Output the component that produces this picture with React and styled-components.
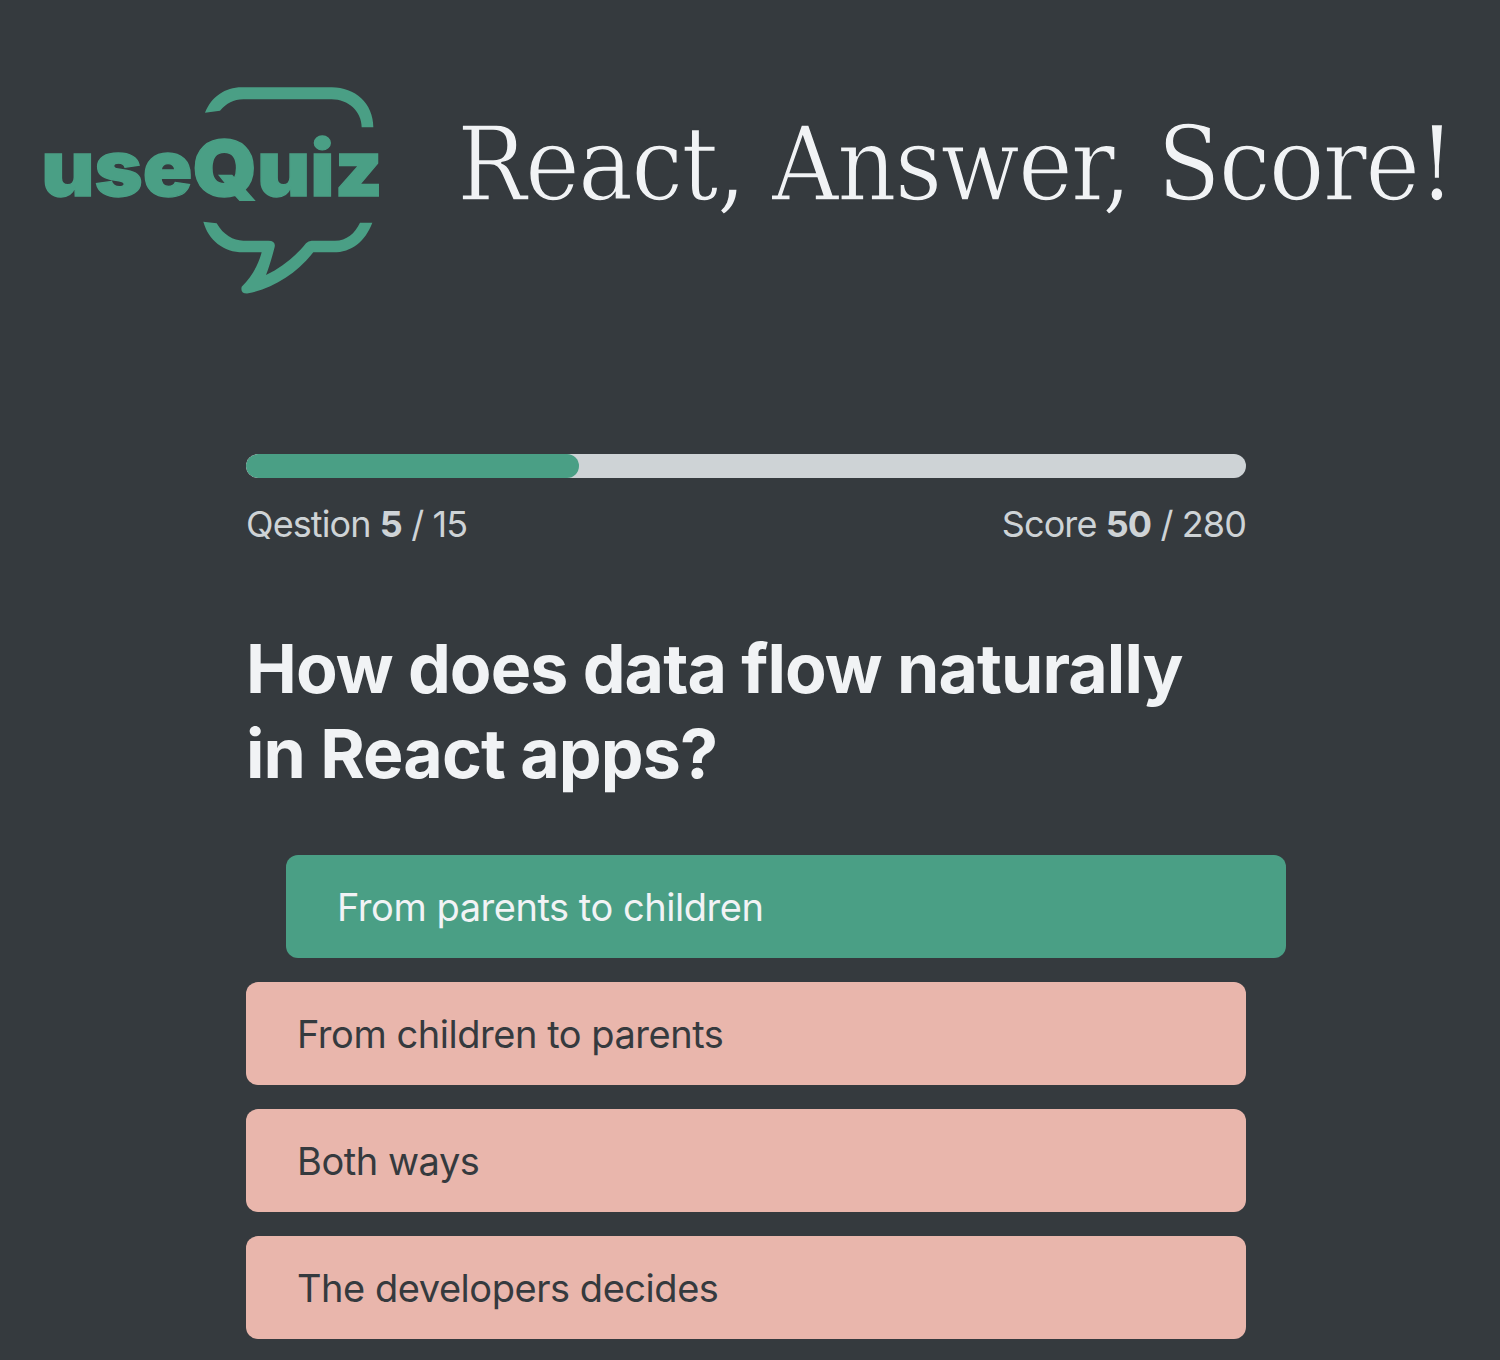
import React from 'react';
import styled, { createGlobalStyle, css } from 'styled-components';

const GlobalStyle = createGlobalStyle`
	* {
		box-sizing: border-box;
		margin: 0;
		padding: 0;
	}
	html, body {
		background: #353a3e;
		overflow: hidden;
	}
	body {
		font-family: Inter, "Liberation Sans", sans-serif;
		color: #f1f3f5;
	}
`;

const AppBlock = styled.div`
	width: 1492px;
	height: 1360px;
	display: flex;
	flex-direction: column;
	align-items: center;
`;

const Header = styled.header`
	width: 100%;
	display: flex;
	align-items: center;
	gap: 57px;
	padding: 70px 0 0 30px;
	margin-bottom: 144px;
`;

const LogoSvg = styled.svg`
	width: 370px;
	height: 240px;
	flex-shrink: 0;
`;

const LogoText = styled.text`
	font-family: Inter, "Liberation Sans", sans-serif;
	font-weight: 900;
	font-size: 232px;
	fill: #4a9f85;
	stroke: #4a9f85;
	stroke-width: 4px;
`;

const Title = styled.h1`
	font-family: "DejaVu Serif Condensed", "DejaVu Serif", serif;
	font-weight: 400;
	font-size: 103px;
	letter-spacing: -1.85px;
	line-height: 1.2;
	color: #f1f3f5;
	white-space: nowrap;
	margin-top: -50px;
	-webkit-text-stroke: 1.5px #353a3e;
`;

const Main = styled.main`
	width: 1000px;
`;

const Progress = styled.div`
	height: 24px;
	border-radius: 12px;
	background: #ced3d6;
	overflow: hidden;
	margin-bottom: 23px;
`;

const ProgressFill = styled.div`
	height: 100%;
	border-radius: 12px;
	background: #4a9f85;
`;

const Stats = styled.div`
	display: flex;
	justify-content: space-between;
	font-size: 36px;
	line-height: 46px;
	letter-spacing: -0.9px;
	color: #ced3d6;
	margin-bottom: 79px;
`;

const Question = styled.h4`
	font-size: 68px;
	font-weight: 700;
	line-height: 85px;
	letter-spacing: -0.9px;
	color: #f1f3f5;
	margin-bottom: 59px;
`;

const Options = styled.div`
	display: flex;
	flex-direction: column;
	gap: 24px;
`;

const Option = styled.button`
	display: block;
	width: 100%;
	height: 103px;
	border: 0;
	border-radius: 12px;
	padding: 1px 51px 0;
	text-align: left;
	font-family: inherit;
	font-size: 38px;
	letter-spacing: -0.46px;
	color: #353a3e;
	background: #e9b6ac;
	${({ $picked }) =>
		$picked &&
		css`
			color: #f1f3f5;
			background: #4a9f85;
			transform: translateX(40px);
		`}
`;

const options = [
	'From parents to children',
	'From children to parents',
	'Both ways',
	'The developers decides',
];

function Logo() {
	return (
		<LogoSvg viewBox="0 0 1110 720">
			<path
				fill="#4a9f85"
				d="M525 128 L570 122 C590 100 610 88 640 88 L905 88 C955 88 995 125 995 172 L1030 172 C1030 100 975 52 905 52 L635 52 C585 52 545 80 525 128 Z"
			/>
			<path
				fill="#4a9f85"
				d="M520 455 L560 460 C580 495 610 512 640 512 L715 512 Q740 512 733 535 C725 565 718 590 708 615 C760 590 800 555 828 520 Q835 512 845 512 L915 512 C950 512 975 490 990 458 L1027 458 C1005 515 965 547 910 547 L850 547 C800 610 730 655 655 670 Q630 672 635 650 C665 620 685 585 695 547 L640 547 C580 547 535 510 520 455 Z"
			/>
			<LogoText transform="translate(34 378) scale(1.06 1)">useQuiz</LogoText>
		</LogoSvg>
	);
}

export default function App() {
	return (
		<AppBlock>
			<GlobalStyle />
			<Header>
				<Logo />
				<Title>React, Answer, Score!</Title>
			</Header>
			<Main>
				<Progress>
					<ProgressFill style={{ width: `${(5 / 15) * 100}%` }} />
				</Progress>
				<Stats>
					<span>
						Qestion <strong>5</strong> / 15
					</span>
					<span>
						Score <strong>50</strong> / 280
					</span>
				</Stats>
				<Question>How does data flow naturally in React apps?</Question>
				<Options>
					{options.map((text, i) => (
						<Option key={text} $picked={i === 0}>
							{text}
						</Option>
					))}
				</Options>
			</Main>
		</AppBlock>
	);
}
